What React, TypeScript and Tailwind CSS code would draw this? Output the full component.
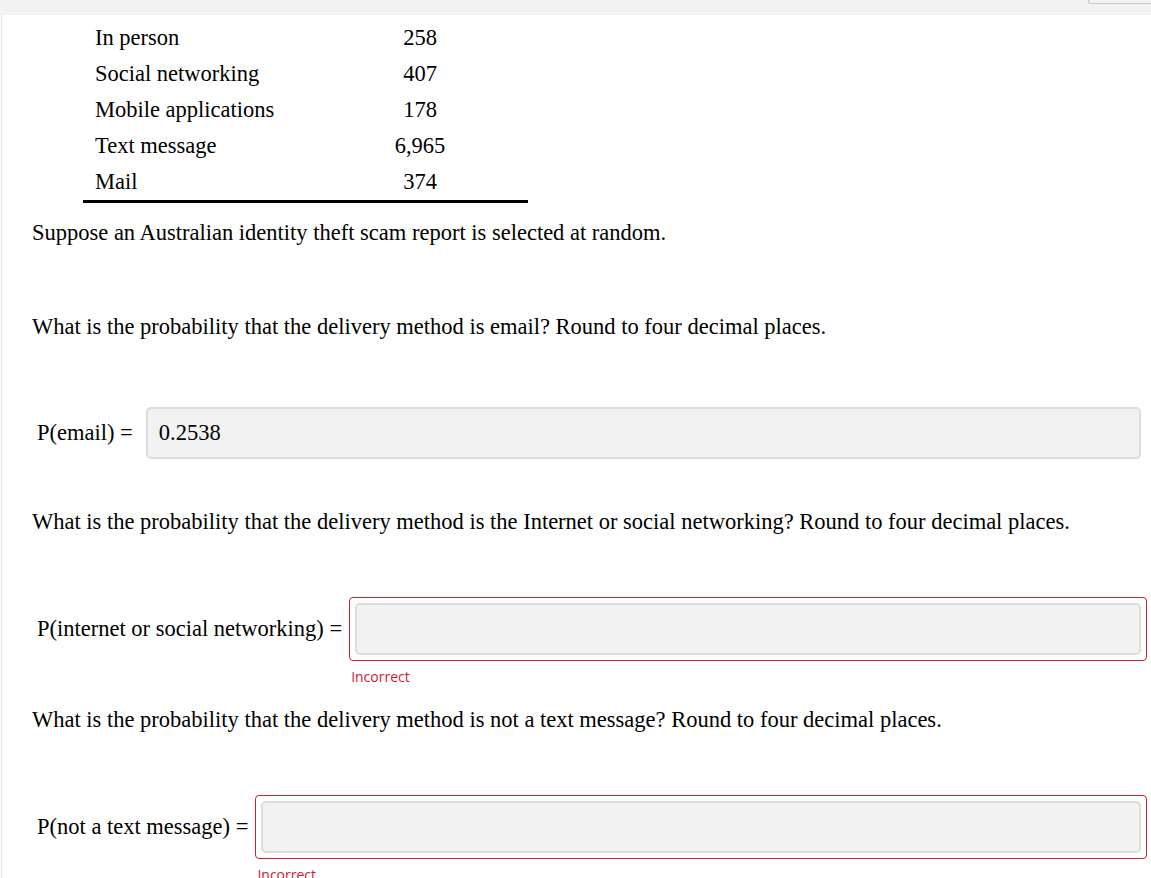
import React from 'react';

const rows: [string, string][] = [
  ['In person', '258'],
  ['Social networking', '407'],
  ['Mobile applications', '178'],
  ['Text message', '6,965'],
  ['Mail', '374'],
];

interface AnswerRowProps {
  label: string;
  value?: string;
  incorrect?: boolean;
}

const AnswerRow: React.FC<AnswerRowProps> = ({ label, value, incorrect }) => (
  <div className="flex items-start pl-[35px] pr-[4px]">
    <span className="whitespace-nowrap mr-[7px] h-[64px] flex items-center">{label}</span>
    <div className="flex-1">
      <div
        className={`p-[5px] border rounded-[4px] ${
          incorrect ? 'border-[#c52233]' : 'border-transparent'
        }`}
      >
        <div className="h-[52px] flex items-center pl-[11px] bg-[#f2f2f2] border-2 border-[#dcdcdc] rounded-[5px]">
          {value}
        </div>
      </div>
      {incorrect && (
        <div className="font-['Open_Sans',sans-serif] text-[14px] leading-[18px] text-[#d0192f] mt-[7px] ml-[2px]">
          Incorrect
        </div>
      )}
    </div>
  </div>
);

const App: React.FC = () => {
  return (
    <div className="min-h-screen bg-white font-['Liberation_Serif',serif] text-[22.5px] text-black overflow-hidden">
      <div className="relative h-[15px] bg-[#f2f2f2]">
        <div className="absolute top-0 right-0 w-[63px] h-[4px] border border-t-0 border-r-0 border-[#c8c8c8] rounded-bl-[3px]" />
      </div>
      <div className="ml-[1px] border-l border-[#e2e2e2] min-h-[863px]">
        {/* data table */}
        <div className="ml-[81px] w-[445px] pt-[5px] border-b-[3px] border-black">
          {rows.map(([name, count]) => (
            <div key={name} className="grid grid-cols-[229px_216px] h-[36px] items-center leading-[28px]">
              <span className="pl-[12px]">{name}</span>
              <span className="text-center">{count}</span>
            </div>
          ))}
        </div>

        <p className="pl-[30px] leading-[28px] mt-[16px]">
          Suppose an Australian identity theft scam report is selected at random.
        </p>

        <p className="pl-[30px] leading-[28px] mt-[66px]">
          What is the probability that the delivery method is email? Round to four decimal places.
        </p>

        <div className="mt-[60px]">
          <AnswerRow label="P(email) =" value="0.2538" />
        </div>

        <p className="pl-[30px] leading-[28px] mt-[43px]">
          What is the probability that the delivery method is the Internet or social networking? Round to four decimal places.
        </p>

        <div className="mt-[61px]">
          <AnswerRow label="P(internet or social networking) =" incorrect />
        </div>

        <p className="pl-[30px] leading-[28px] mt-[20px]">
          What is the probability that the delivery method is not a text message? Round to four decimal places.
        </p>

        <div className="mt-[61px]">
          <AnswerRow label="P(not a text message) =" incorrect />
        </div>
      </div>
    </div>
  );
};

export default App;
